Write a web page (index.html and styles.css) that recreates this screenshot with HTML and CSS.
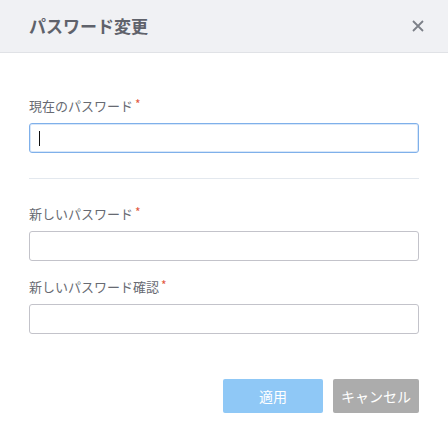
FILE: index.html
```html
<!DOCTYPE html>
<html lang="ja">
<head>
<meta charset="utf-8">
<link rel="stylesheet" href="styles.css">
</head>
<body>
<div class="dialog">
  <div class="dialog-header">
    <h1 class="dialog-title">パスワード変更</h1>
    <button class="close-btn" aria-label="close">
      <svg width="12" height="12" viewBox="0 0 12 12"><path d="M1 1L11 11M11 1L1 11" stroke="#7c8088" stroke-width="1.8" fill="none"/></svg>
    </button>
  </div>
  <div class="dialog-body">
    <div class="field">
      <label class="field-label">現在のパスワード<span class="req">*</span></label>
      <div class="input input-focus"><span class="caret"></span></div>
    </div>
    <div class="divider"></div>
    <div class="field field-new">
      <label class="field-label">新しいパスワード<span class="req">*</span></label>
      <div class="input"></div>
    </div>
    <div class="field field-confirm">
      <label class="field-label">新しいパスワード確認<span class="req">*</span></label>
      <div class="input"></div>
    </div>
    <div class="actions">
      <button class="btn btn-apply">適用</button>
      <button class="btn btn-cancel">キャンセル</button>
    </div>
  </div>
</div>
</body>
</html>
```
FILE: styles.css
```css
* { box-sizing: border-box; }
html, body { margin: 0; padding: 0; background: #fff; }
body {
  font-family: "Noto Sans CJK JP", "Noto Sans", sans-serif;
  width: 448px;
  height: 438px;
  overflow: hidden;
}
.dialog { width: 448px; }
.dialog-header {
  height: 53px;
  background: #f0f1f4;
  border-bottom: 1px solid #e0e2e6;
  display: flex;
  align-items: center;
  justify-content: space-between;
  padding: 0 24px 0 29px;
}
.dialog-title {
  margin: 0;
  font-size: 17px;
  font-weight: 700;
  color: #5f626b;
  line-height: 20px;
}
.close-btn {
  border: 0;
  background: transparent;
  padding: 0;
  width: 12px;
  height: 12px;
  display: flex;
}
.dialog-body { padding: 44px 29px 0 29px; }
.field { display: flex; flex-direction: column; gap: 8px; }
.field-label {
  font-size: 13px;
  line-height: 18px;
  color: #676a72;
  display: flex;
  align-items: flex-start;
}
.req { color: #e2583e; font-size: 12px; line-height: 14px; margin-left: 2px; }
.input {
  height: 30px;
  border: 1px solid #c3c3ca;
  border-radius: 3px;
  background: #fff;
  display: flex;
  align-items: center;
  padding-left: 9px;
}
.input-focus {
  border-color: #7fb0ea;
  box-shadow: 0 0 0 1px #d8e7f9 inset;
}
.caret { width: 1px; height: 15px; background: #111; }
.divider { height: 1px; background: #e3e8ee; margin-top: 25px; }
.field-new { margin-top: 26px; }
.field-confirm { margin-top: 17px; }
.actions {
  display: flex;
  justify-content: flex-end;
  gap: 10px;
  margin-top: 45px;
}
.btn {
  height: 34px;
  border: 0;
  border-radius: 2px;
  color: #fff;
  font-family: "Noto Sans CJK JP", "Noto Sans", sans-serif;
  font-size: 14px;
  padding: 0;
}
.btn-apply { width: 100px; background: #8fc8f6; }
.btn-cancel { width: 86px; background: #acacac; }
```
